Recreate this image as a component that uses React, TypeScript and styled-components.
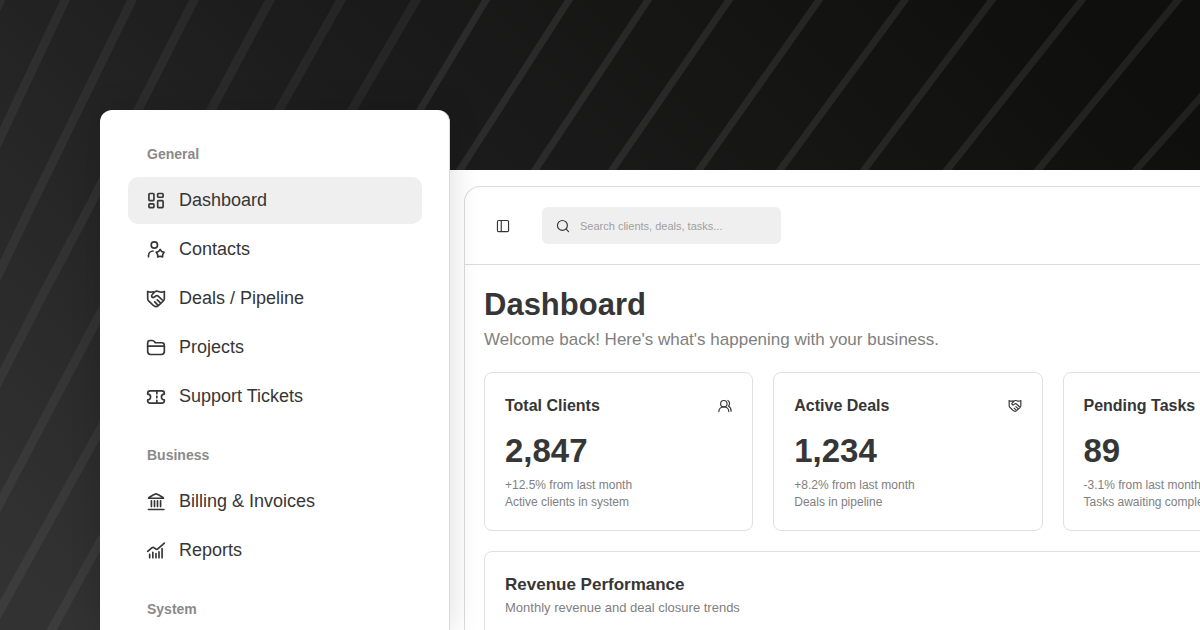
import React from 'react';
import styled, { createGlobalStyle } from 'styled-components';

const Global = createGlobalStyle`
  * { box-sizing: border-box; }
  body { margin: 0; background: #1c1c1c; overflow: hidden; }
  body, button, input { font-family: 'Liberation Sans', Arial, sans-serif; }
  h1, h2, p { margin: 0; }
`;

const Page = styled.div`
  position: relative;
  display: flex;
  align-items: stretch;
  min-height: 100vh;
  max-height: 100vh;
  padding: 110px 0 0 100px;
  overflow: hidden;
`;

const Backdrop = styled.svg`
  position: absolute;
  inset: 0;
  width: 100%;
  height: 100%;
`;

const Sidebar = styled.nav`
  position: relative;
  z-index: 2;
  flex: 0 0 350px;
  padding: 35px 27px 0 28px;
  background: #fff;
  border-right: 1px solid #d9d9d9;
  border-radius: 12px 12px 0 0;
  box-shadow: 0 0 32px rgba(0, 0, 0, 0.14);
`;

const Group = styled.section`
  margin-bottom: 26px;
`;

const GroupTitle = styled.h2`
  padding: 0 19px;
  margin-bottom: 14px;
  font-size: 14px;
  line-height: 18px;
  font-weight: 700;
  color: #8a8a8a;
`;

const NavList = styled.ul`
  display: flex;
  flex-direction: column;
  gap: 2px;
  margin: 0;
  padding: 0;
  list-style: none;
`;

const NavLink = styled.a<{ $active?: boolean }>`
  display: flex;
  align-items: center;
  gap: 13px;
  height: 47px;
  padding: 0 18px;
  border-radius: 10px;
  background: ${(p) => (p.$active ? '#efefef' : 'transparent')};
  color: #363636;
  font-size: 18px;
  text-decoration: none;
`;

const Glyph = styled.svg`
  flex: none;
  fill: none;
  color: #363636;
  stroke: currentColor;
  stroke-width: 2;
  stroke-linecap: round;
  stroke-linejoin: round;
`;

const Main = styled.main`
  position: relative;
  flex: 1 0 1192px;
  margin-top: 60px;
  padding: 16px 0 0 14px;
  background: #fff;
`;

const Frame = styled.div`
  height: 100%;
  border: 1px solid #dcdcdc;
  border-bottom: 0;
  border-radius: 16px 16px 0 0;
`;

const TopBar = styled.header`
  display: flex;
  align-items: center;
  gap: 29px;
  height: 78px;
  padding: 0 28px;
  border-bottom: 1px solid #dcdcdc;
`;

const IconButton = styled.button`
  display: flex;
  padding: 3px;
  border: 0;
  background: none;
`;

const SearchBox = styled.label`
  display: flex;
  align-items: center;
  gap: 10px;
  width: 239px;
  height: 37px;
  padding: 0 14px;
  border-radius: 6px;
  background: #efefef;
`;

const SearchInput = styled.input`
  flex: 1;
  min-width: 0;
  padding: 0;
  border: 0;
  outline: 0;
  background: none;
  font-size: 11px;
  &::placeholder { color: #a0a0a0; opacity: 1; }
`;

const Content = styled.div`
  padding: 21px 20px 0 19px;
`;

const PageTitle = styled.h1`
  font-size: 31px;
  line-height: 38px;
  color: #363636;
`;

const Lead = styled.p`
  margin-top: 5px;
  font-size: 17px;
  line-height: 22px;
  color: #808080;
`;

const Cards = styled.div`
  display: grid;
  grid-template-columns: repeat(4, 1fr);
  gap: 20px;
  margin: 21px 0 20px;
`;

const Card = styled.article`
  padding: 22px 20px 19px;
  border: 1px solid #e0e0e0;
  border-radius: 8px;
  background: #fff;
`;

const CardHead = styled.div`
  display: flex;
  align-items: center;
  justify-content: space-between;
`;

const CardTitle = styled.h2<{ $large?: boolean }>`
  font-size: ${(p) => (p.$large ? 17 : 16)}px;
  line-height: 22px;
  color: #363636;
`;

const Figure = styled.p`
  margin: 13px 0 5px;
  font-size: 33px;
  line-height: 42px;
  font-weight: 700;
  color: #363636;
`;

const Note = styled.p<{ $large?: boolean }>`
  font-size: ${(p) => (p.$large ? 13 : 12)}px;
  line-height: ${(p) => (p.$large ? 24 : 17)}px;
  color: #808080;
  white-space: nowrap;
`;

type IconName =
  | 'dashboard' | 'contacts' | 'deals' | 'folder' | 'ticket'
  | 'bank' | 'chart' | 'panel' | 'search' | 'users';

const shapes: Record<IconName, React.ReactNode> = {
  dashboard: (
    <>
      <rect x="3.500" y="3" width="6" height="8.500" rx="1" />
      <rect x="14" y="3" width="6.500" height="4.500" rx="1" />
      <rect x="14" y="11.500" width="6.500" height="8.500" rx="1" />
      <rect x="3.500" y="15.500" width="6" height="4.500" rx="1" />
    </>
  ),
  contacts: (
    <>
      <circle cx="10" cy="6" r="3.800" />
      <path d="M3 20v-1.500a5.500 5.500 0 0 1 5.500-5.300" />
      <path d="m17 11.400 1.900 2.300 2.800 1-1.600 2.600-.2 3-2.900-.8-2.900.8-.2-3-1.600-2.600 2.800-1z" />
    </>
  ),
  deals: (
    <>
      <path d="M2 3c2.500 1.200 4.500.9 6.800.3M22 3c-2.700 1.200-4.700.9-7-.1-2-.7-3.500-.4-5 1L7.300 6.900c-.8.8-.8 2 0 2.700s2 .7 2.800 0l1.700-1.300c1-.6 2-.4 2.800.3l5 4.600" />
      <path d="M2 3v8.500c0 1.200.3 1.900 1.100 2.700l5.500 5.300c1.800 1.700 4.400 1.900 6.200.4l5.700-5.200c1-1 1.500-1.700 1.500-3V3" />
      <path d="m13.500 13 3.800 3.600M10.500 15.500l3.500 3.500" />
    </>
  ),
  folder: (
    <>
      <path d="M2 16V6C2 4 3 3 5 3h2.500c1.500 0 2 .4 2.800 1.500l.8 1.200H19c2 0 3 1 3 3V16c0 2.800-1 3.800-3.500 3.800h-13C3 19.800 2 18.800 2 16z" />
      <path d="M2 9.800h20" />
    </>
  ),
  ticket: (
    <>
      <path d="M2 7.500c0-2 1-2.800 3-2.800h14c2 0 3 .8 3 2.800v1a3.500 3.500 0 0 0 0 7v1c0 2-1 2.800-3 2.800H5c-2 0-3-.8-3-2.800v-1a3.500 3.500 0 0 0 0-7z" />
      <path d="M13 5.500v2.500M13 11v2M13 16v2.500" />
    </>
  ),
  bank: (
    <>
      <path d="M3 7.500C3.500 6 6 5 8 4l4-1.800L16 4c2 1 4.500 2 5 3.500z" />
      <path d="M6.500 10.500v7M10.200 10.500v7M13.800 10.500v7M17.500 10.500v7M3 21h18.500" />
    </>
  ),
  chart: (
    <>
      <path d="m2 12.500 5-4.300c1.200-1 1.900-1 3 0l1.500 1.300c1 .9 1.700.9 2.700 0L22 2.500" />
      <path d="M4.400 16v4M8.200 13.500V20M12 15v5M15.600 13v7M19.300 9v11" />
    </>
  ),
  panel: (
    <>
      <rect x="2.500" y="2.500" width="19" height="19" rx="2" />
      <path d="M9 3v18" />
    </>
  ),
  search: (
    <>
      <circle cx="11" cy="11" r="8.500" />
      <path d="m17.500 17.500 4 4" />
    </>
  ),
  users: (
    <>
      <circle cx="10" cy="8" r="5.500" />
      <path d="M1.500 21.500c0-4.500 3.500-8 8.500-8s8.500 3.500 8.500 8M17 2.500c2 1 2.800 3 2.800 5.200s-.8 3.500-2 4.500c2.800 1.600 4.700 4.500 4.700 8.800" />
    </>
  ),
};

const Icon = ({ name, size }: { name: IconName; size: number }) => (
  <Glyph viewBox="0 0 24 24" width={size} height={size} aria-hidden="true">
    {shapes[name]}
  </Glyph>
);

const stripes = [
  '5,-10 -5,12',
  '70,-10 65,0 -8,155',
  '136,-10 132,0 34,200 -10,292',
  '199,-10 194,0 138,110 93,200 40,300 -10,398',
  '275,-10 270,0 211,110 100,314 0,503 -10,522',
  '346,-10 341,0 279,110 100,430 0,610 -10,628',
  '422,-10 416,0 352,110 100,542 45,642',
  '492,-10 486,0 420,110 300,320',
  '575,-10 569,0 460,170 400,264',
  '655,-10 648,0 535,170 500,224',
  '736,-10 729,0 612,170 600,187',
  '825,-10 819,0 699,170 687,187',
  '912,-10 905,0 780,170 768,187',
  '999,-10 992,0 864,170 851,187',
  '1089,-10 1082,0 947,170 934,187',
  '1186,-10 1178,0 1038,170 1024,187',
  '1210,86 1200,98 1136,170 1121,187',
];

const groups: { title: string; items: { label: string; icon: IconName }[] }[] = [
  {
    title: 'General',
    items: [
      { label: 'Dashboard', icon: 'dashboard' },
      { label: 'Contacts', icon: 'contacts' },
      { label: 'Deals / Pipeline', icon: 'deals' },
      { label: 'Projects', icon: 'folder' },
      { label: 'Support Tickets', icon: 'ticket' },
    ],
  },
  {
    title: 'Business',
    items: [
      { label: 'Billing & Invoices', icon: 'bank' },
      { label: 'Reports', icon: 'chart' },
    ],
  },
  { title: 'System', items: [] },
];

const stats: { title: string; value: string; change: string; note: string; icon?: IconName }[] = [
  { title: 'Total Clients', value: '2,847', change: '+12.5% from last month', note: 'Active clients in system', icon: 'users' },
  { title: 'Active Deals', value: '1,234', change: '+8.2% from last month', note: 'Deals in pipeline', icon: 'deals' },
  { title: 'Pending Tasks', value: '89', change: '-3.1% from last month', note: 'Tasks awaiting completion' },
];

export default function App() {
  return (
    <Page>
      <Global />
      <Backdrop viewBox="0 0 1200 630" preserveAspectRatio="xMidYMid slice" aria-hidden="true">
        <defs>
          <linearGradient id="shade" gradientUnits="userSpaceOnUse" x1="1050" y1="0" x2="250" y2="800">
            <stop offset="0" stopColor="#0f0f0e" />
            <stop offset="0.5" stopColor="#1c1c1c" />
            <stop offset="1" stopColor="#323232" />
          </linearGradient>
        </defs>
        <rect width="1200" height="630" fill="url(#shade)" />
        {stripes.map((points, i) => (
          <polyline
            key={points}
            points={points}
            fill="none"
            stroke="#fff"
            strokeOpacity={i < 7 ? 0.05 : 0.08}
            strokeWidth={i < 7 ? 9 : 7}
          />
        ))}
      </Backdrop>

      <Sidebar aria-label="Main">
        {groups.map((group) => (
          <Group key={group.title}>
            <GroupTitle>{group.title}</GroupTitle>
            <NavList>
              {group.items.map((item) => (
                <li key={item.label}>
                  <NavLink href="#" $active={item.label === 'Dashboard'}>
                    <Icon name={item.icon} size={20} />
                    {item.label}
                  </NavLink>
                </li>
              ))}
            </NavList>
          </Group>
        ))}
      </Sidebar>

      <Main>
        <Frame>
          <TopBar>
            <IconButton type="button" aria-label="Toggle sidebar">
              <Icon name="panel" size={14} />
            </IconButton>
            <SearchBox>
              <Icon name="search" size={14} />
              <SearchInput type="text" aria-label="Search" placeholder="Search clients, deals, tasks..." />
            </SearchBox>
          </TopBar>
          <Content>
            <PageTitle>Dashboard</PageTitle>
            <Lead>Welcome back! Here's what's happening with your business.</Lead>
            <Cards>
              {stats.map((stat) => (
                <Card key={stat.title}>
                  <CardHead>
                    <CardTitle>{stat.title}</CardTitle>
                    {stat.icon && <Icon name={stat.icon} size={14} />}
                  </CardHead>
                  <Figure>{stat.value}</Figure>
                  <Note>{stat.change}</Note>
                  <Note>{stat.note}</Note>
                </Card>
              ))}
            </Cards>
            <Card>
              <CardTitle $large>Revenue Performance</CardTitle>
              <Note $large>Monthly revenue and deal closure trends</Note>
            </Card>
          </Content>
        </Frame>
      </Main>
    </Page>
  );
}
